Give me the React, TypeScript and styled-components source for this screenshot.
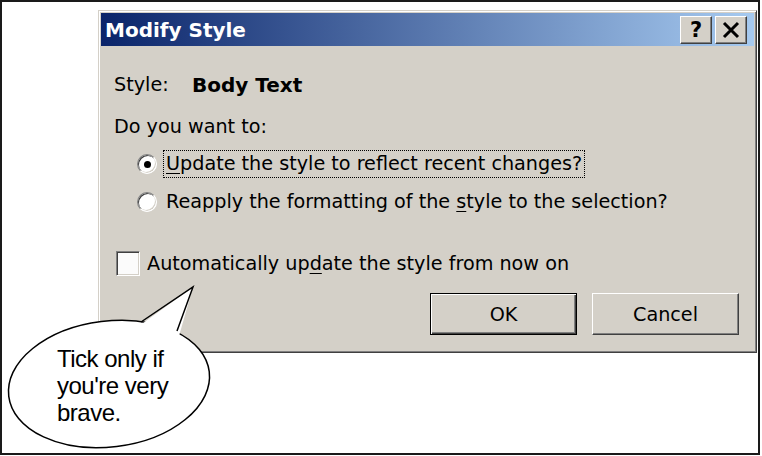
import styled, { createGlobalStyle } from "styled-components";

const GlobalStyle = createGlobalStyle`
  html, body {
    margin: 0;
    padding: 0;
    background: #fff;
  }
`;

const Frame = styled.div`
  position: relative;
  box-sizing: border-box;
  width: 760px;
  height: 455px;
  border: 2px solid #1a1a1a;
  background: #fff;
  padding: 8px 0 0 96px;
  font-family: "DejaVu Sans", Verdana, sans-serif;
`;

const Dialog = styled.div`
  box-sizing: border-box;
  width: 659px;
  height: 343px;
  display: flex;
  flex-direction: column;
  padding: 2px;
  background: #d4d0c8;
  border: 1px solid;
  border-color: #d4d0c8 #404040 #404040 #d4d0c8;
  box-shadow: inset 1px 1px 0 #fff, inset -1px -1px 0 #808080;
`;

const TitleBar = styled.div`
  flex: none;
  height: 33px;
  display: flex;
  align-items: center;
  justify-content: space-between;
  padding: 0 7px 0 4px;
  background: linear-gradient(to right, #0a246a, #a6caf0);
`;

const Title = styled.span`
  color: #fff;
  font-weight: bold;
  font-size: 20px;
`;

const Controls = styled.div`
  display: flex;
  gap: 3px;
`;

const ControlButton = styled.button`
  box-sizing: border-box;
  width: 32px;
  height: 28px;
  margin: 0;
  padding: 0;
  display: flex;
  align-items: center;
  justify-content: center;
  background: #d4d0c8;
  border: 1px solid;
  border-color: #fff #404040 #404040 #fff;
  box-shadow: inset -1px -1px 0 #808080;
  color: #000;
  font: bold 21px "DejaVu Sans", sans-serif;
`;

const Body = styled.div`
  flex: 1;
  display: flex;
  flex-direction: column;
  padding: 0 15px 0 13px;
  font-size: 19.2px;
  color: #000;
`;

const InfoRow = styled.div`
  margin-top: 27px;
  height: 24px;
  line-height: 24px;
  display: flex;
`;

const Label = styled.span`
  width: 78px;
`;

const Value = styled.span`
  font-weight: bold;
  font-size: 20px;
`;

const Prompt = styled.div`
  margin-top: 18px;
  height: 24px;
  line-height: 24px;
`;

const Options = styled.div`
  margin-top: 11px;
  padding-left: 23px;
  display: flex;
  flex-direction: column;
  gap: 10px;
`;

const Option = styled.div`
  height: 28px;
  display: flex;
  align-items: center;
  gap: 6px;
`;

const Radio = styled.span<{ $checked?: boolean }>`
  position: relative;
  box-sizing: border-box;
  width: 20px;
  height: 20px;
  border-radius: 50%;
  background: #fff;
  border: 1px solid;
  border-color: #808080 #fff #fff #808080;
  box-shadow: inset 1px 1px 0 #404040, inset -1px -1px 0 #d4d0c8;

  &::after {
    content: "";
    display: ${(p) => (p.$checked ? "block" : "none")};
    position: absolute;
    left: 5.5px;
    top: 5.5px;
    width: 7px;
    height: 7px;
    border-radius: 50%;
    background: #000;
  }
`;

const OptionText = styled.span<{ $focused?: boolean }>`
  box-sizing: border-box;
  height: 28px;
  line-height: 26px;
  padding: 0 2px;
  border: 1px dotted ${(p) => (p.$focused ? "#000" : "transparent")};
`;

const Key = styled.span`
  text-decoration: underline;
  text-underline-offset: 3px;
`;

const CheckRow = styled.div`
  margin-top: 33px;
  height: 28px;
  padding-left: 2px;
  display: flex;
  align-items: center;
  gap: 7px;
`;

const CheckBox = styled.span`
  box-sizing: border-box;
  width: 24px;
  height: 25px;
  background: #fbfbfb;
  border: 1px solid;
  border-color: #808080 #fff #fff #808080;
  box-shadow: inset 1px 1px 0 #404040, inset -1px -1px 0 #d4d0c8;
`;

const ButtonRow = styled.div`
  margin-top: 16px;
  display: flex;
  justify-content: flex-end;
  gap: 15px;
`;

const PushButton = styled.button<{ $default?: boolean }>`
  box-sizing: border-box;
  width: 147px;
  height: 42px;
  margin: 0;
  padding: 0;
  background: #d4d0c8;
  color: #000;
  font: 19.2px "DejaVu Sans", sans-serif;
  border: 1px solid;
  border-color: ${(p) => (p.$default ? "#000" : "#fff #404040 #404040 #fff")};
  box-shadow: ${(p) =>
    p.$default
      ? "inset 1px 1px 0 #fff, inset -1px -1px 0 #404040, inset -2px -2px 0 #808080"
      : "inset -1px -1px 0 #808080"};
`;

const Bubble = styled.div`
  position: absolute;
  left: 4px;
  top: 282px;
  width: 214px;
  height: 170px;
`;

const BubbleShape = styled.svg`
  position: absolute;
  left: 0;
  top: 0;
`;

const BubbleText = styled.div`
  position: absolute;
  left: 51px;
  top: 61px;
  font-family: "Liberation Sans", Arial, sans-serif;
  font-size: 24px;
  line-height: 27px;
  letter-spacing: -0.5px;
  color: #000;
`;

export default function App() {
  return (
    <>
      <GlobalStyle />
      <Frame>
        <Dialog>
          <TitleBar>
            <Title>Modify Style</Title>
            <Controls>
              <ControlButton>?</ControlButton>
              <ControlButton aria-label="Close">
                <svg width="18" height="18" viewBox="0 0 18 18">
                  <path d="M2 2 L16 16 M16 2 L2 16" stroke="#000" strokeWidth="3" />
                </svg>
              </ControlButton>
            </Controls>
          </TitleBar>
          <Body>
            <InfoRow>
              <Label>Style:</Label>
              <Value>Body Text</Value>
            </InfoRow>
            <Prompt>Do you want to:</Prompt>
            <Options>
              <Option>
                <Radio $checked />
                <OptionText $focused>
                  <Key>U</Key>pdate the style to reflect recent changes?
                </OptionText>
              </Option>
              <Option>
                <Radio />
                <OptionText>
                  Reapply the formatting of the <Key>s</Key>tyle to the selection?
                </OptionText>
              </Option>
            </Options>
            <CheckRow>
              <CheckBox />
              <span>
                Automatically up<Key>d</Key>ate the style from now on
              </span>
            </CheckRow>
            <ButtonRow>
              <PushButton $default>OK</PushButton>
              <PushButton>Cancel</PushButton>
            </ButtonRow>
          </Body>
        </Dialog>
        <Bubble>
          <BubbleShape width="214" height="170" viewBox="0 0 214 170">
            <ellipse
              cx="103"
              cy="100"
              rx="101"
              ry="63"
              transform="rotate(-7 103 100)"
              fill="#fff"
              stroke="#000"
              strokeWidth="1.5"
            />
            <polygon points="133,42 187,3 173,52" fill="#fff" />
            <polyline
              points="135,38 187,3 171,47"
              fill="none"
              stroke="#000"
              strokeWidth="1.5"
            />
          </BubbleShape>
          <BubbleText>
            Tick only if
            <br />
            you're very
            <br />
            brave.
          </BubbleText>
        </Bubble>
      </Frame>
    </>
  );
}
